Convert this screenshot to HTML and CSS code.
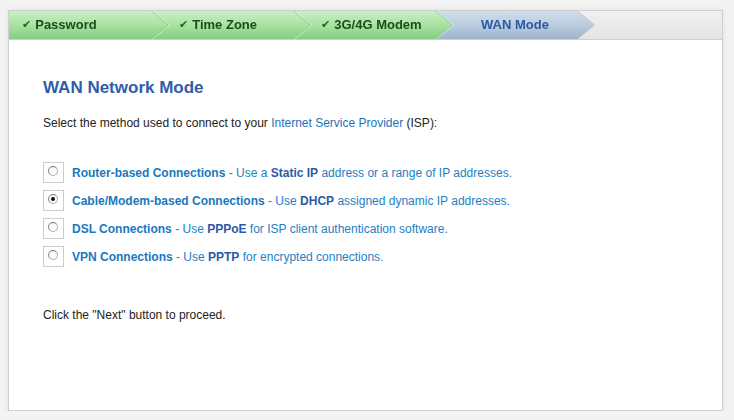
FILE: index.html
```html
<!DOCTYPE html>
<html>
<head>
<meta charset="utf-8">
<link rel="stylesheet" href="styles.css">
</head>
<body>
<div class="panel">
  <div class="steps">
    <div class="step done s1"><div class="shape"><span class="chk">✔</span>Password</div></div>
    <div class="step done s2"><div class="shape"><span class="chk">✔</span>Time Zone</div></div>
    <div class="step done s3"><div class="shape"><span class="chk">✔</span>3G/4G Modem</div></div>
    <div class="step current s4"><div class="shape">WAN Mode</div></div>
  </div>
  <div class="content">
    <h1 class="title">WAN Network Mode</h1>
    <p class="intro">Select the method used to connect to your <span class="link">Internet Service Provider</span> (ISP):</p>
    <div class="options">
      <label class="option"><span class="box"><span class="radio"></span></span><span class="text"><b>Router-based Connections</b> - Use a <b class="kw">Static IP</b> address or a range of IP addresses.</span></label>
      <label class="option"><span class="box"><span class="radio on"></span></span><span class="text"><b>Cable/Modem-based Connections</b> - Use <b class="kw">DHCP</b> assigned dynamic IP addresses.</span></label>
      <label class="option"><span class="box"><span class="radio"></span></span><span class="text"><b>DSL Connections</b> - Use <b class="kw">PPPoE</b> for ISP client authentication software.</span></label>
      <label class="option"><span class="box"><span class="radio"></span></span><span class="text"><b>VPN Connections</b> - Use <b class="kw">PPTP</b> for encrypted connections.</span></label>
    </div>
    <p class="note">Click the "Next" button to proceed.</p>
  </div>
</div>
</body>
</html>
```

FILE: styles.css
```css
html, body {
  margin: 0;
  padding: 0;
  background: #f3f3f3;
}
body {
  padding: 10px 0 0 8px;
  font-family: "Liberation Sans", Arial, sans-serif;
}
.panel {
  width: 713px;
  height: 399px;
  background: #fff;
  border: 1px solid #cfcfcf;
  box-shadow: 0 0 6px rgba(0,0,0,0.08);
}
.steps {
  display: flex;
  height: 28px;
  background: linear-gradient(#f0f0f0, #e4e4e4);
  border-bottom: 1px solid #cfcfcf;
}
.step {
  width: 159px;
  margin-right: -17px;
  height: 28px;
  filter: drop-shadow(1px 0 0 #6fcd6c) drop-shadow(1px 0 0 rgba(255,255,255,0.7));
}
.s1 { z-index: 4; }
.s2 { z-index: 3; }
.s3 { z-index: 2; }
.s4 { z-index: 1; filter: drop-shadow(1px 0 0 #b2c4d6); }
.shape {
  height: 28px;
  display: flex;
  align-items: center;
  font-size: 13px;
  font-weight: bold;
  clip-path: polygon(0 0, 142px 0, 159px 50%, 142px 100%, 0 100%);
  padding-left: 28px;
  padding-bottom: 1px;
  box-sizing: border-box;
}
.s1 .shape { padding-left: 13px; }
.done .shape {
  background: linear-gradient(#c9f0c4, #a5e09f 55%, #86cd80);
  color: #1f4a1e;
}
.current .shape {
  background: linear-gradient(#d0dfec, #b8cadd 55%, #9eb3ca);
  color: #2a5aa6;
  padding-left: 46px;
}
.chk {
  font-family: "DejaVu Sans", sans-serif;
  font-size: 11px;
  color: #1c6b1c;
  margin-right: 4px;
}
.content {
  padding: 0 0 0 34px;
}
.title {
  margin: 38px 0 0;
  font-size: 17px;
  line-height: 20px;
  font-weight: bold;
  color: #2f5ea8;
}
.intro {
  margin: 17px 0 0;
  font-size: 12px;
  line-height: 16px;
  color: #222;
}
.link { color: #1d72b8; }
.options {
  margin-top: 32px;
  display: flex;
  flex-direction: column;
  gap: 8px;
}
.option {
  display: flex;
  align-items: center;
  height: 20px;
  font-size: 12px;
  color: #1e80c4;
}
.option b { color: #1a78bd; }
.option b.kw { color: #2b5aa6; }
.box {
  width: 19px;
  height: 19px;
  border: 1px solid #cccccc;
  background: #fff;
  margin-right: 8px;
  position: relative;
  flex: none;
  margin-top: -1px;
}
.radio {
  position: absolute;
  left: 4px;
  top: 3px;
  width: 8px;
  height: 8px;
  border-radius: 50%;
  border: 1px solid #b0b0b0;
  border-top-color: #777;
  border-left-color: #888;
  background: radial-gradient(circle at 60% 60%, #fff, #eee);
}
.radio.on::after {
  content: "";
  position: absolute;
  left: 2px;
  top: 2px;
  width: 4px;
  height: 4px;
  border-radius: 50%;
  background: #111;
}
.note {
  margin: 40px 0 0;
  font-size: 12px;
  line-height: 16px;
  color: #222;
}
```
